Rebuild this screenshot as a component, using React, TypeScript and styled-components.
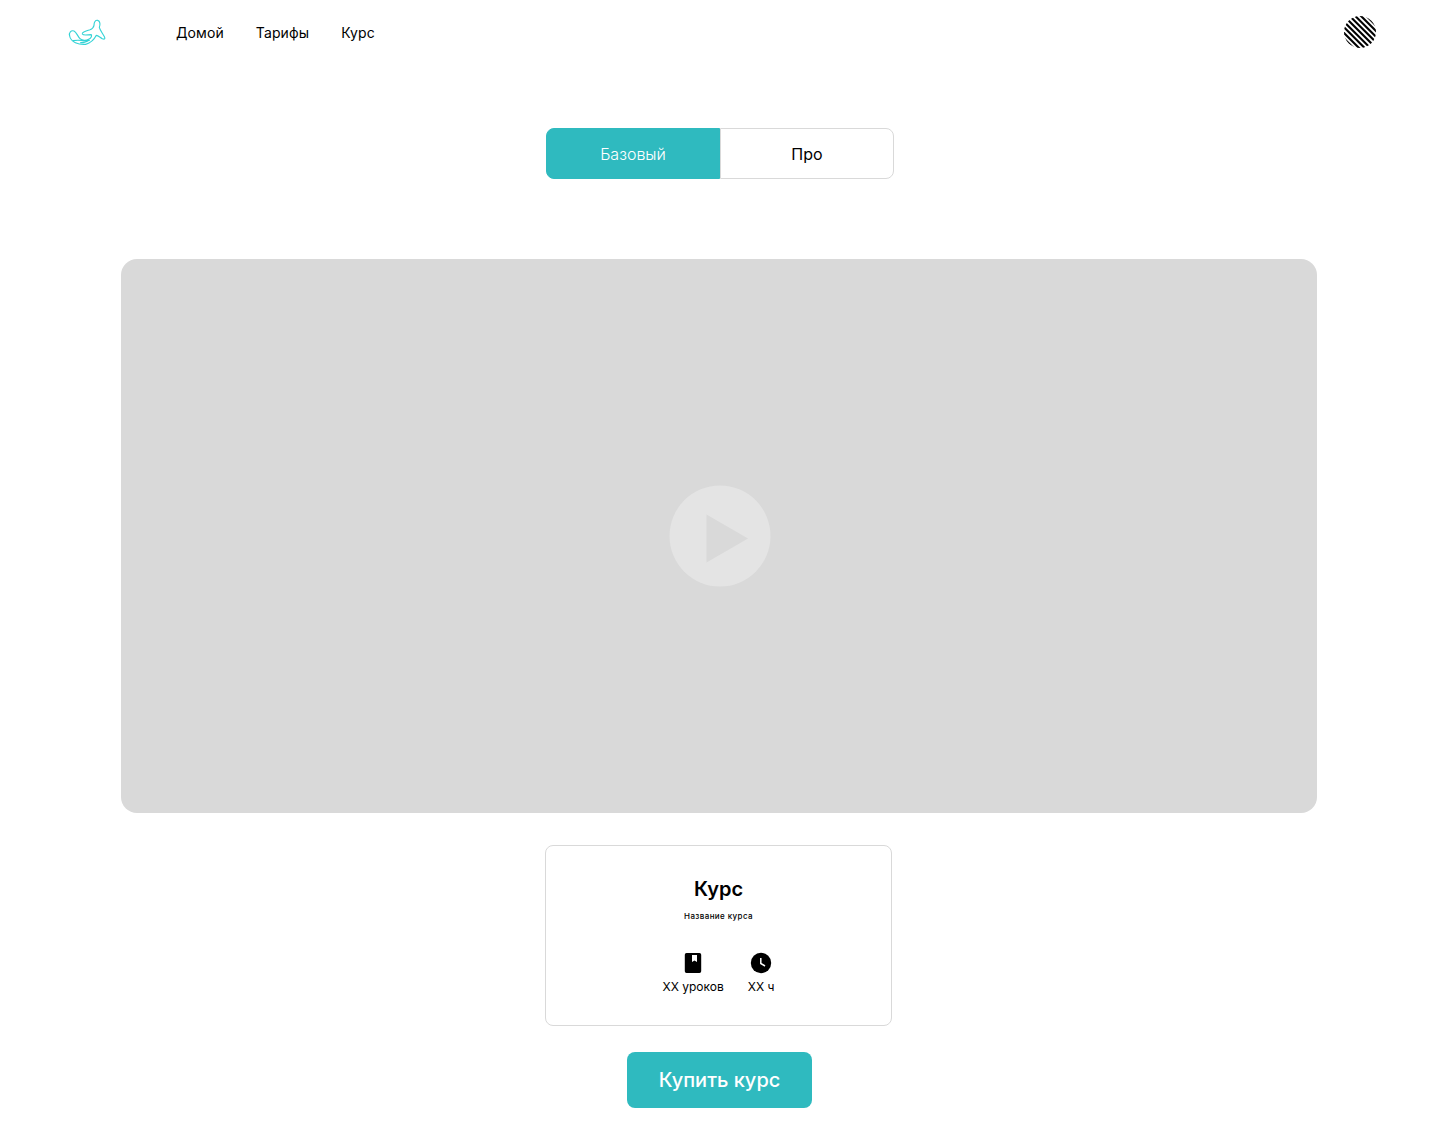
import React from "react";
import styled, { createGlobalStyle } from "styled-components";

const GlobalStyle = createGlobalStyle`
  *, *::before, *::after { box-sizing: border-box; }
  body { margin: 0; background: #fff; color: #000; font-family: Inter, "Liberation Sans", sans-serif; }
  button { font: inherit; margin: 0; cursor: pointer; }
`;

const Page = styled.div`
  display: flex;
  flex-direction: column;
  align-items: center;
  min-height: 1140px;
`;

const Header = styled.header`
  display: flex;
  align-items: center;
  width: 100%;
  height: 64px;
  padding: 0 64px 0 60px;
`;

const Nav = styled.nav`
  display: flex;
  gap: 32px;
  margin-left: 62px;
`;

const NavLink = styled.a`
  font-size: 14px;
  line-height: 20px;
  letter-spacing: 0.1px;
  padding-top: 1px;
  color: #000;
  text-decoration: none;
`;

const Avatar = styled.svg`
  display: block;
  width: 32px;
  height: 32px;
  margin-left: auto;
`;

const Tabs = styled.div`
  display: flex;
  width: 348px;
  height: 51px;
  margin-top: 64px;
`;

const Tab = styled.button<{ $active?: boolean }>`
  flex: 1;
  padding: 0;
  font-size: 16px;
  line-height: 24px;
  color: ${(p) => (p.$active ? "#fff" : "#000")};
  background: ${(p) => (p.$active ? "#2fbabf" : "#fff")};
  border: 1px solid ${(p) => (p.$active ? "#2fbabf" : "#d9d9d9")};
  font-weight: ${(p) => (p.$active ? 300 : 400)};
  &:first-child { border-radius: 8px 0 0 8px; }
  &:last-child { border-radius: 0 8px 8px 0; }
`;

const Video = styled.section`
  display: flex;
  align-items: center;
  justify-content: center;
  width: 1196px;
  height: 554px;
  margin: 80px 2px 0 0;
  border-radius: 16px;
  background: #d9d9d9;
`;

const PlayIcon = styled.svg`
  display: block;
  width: 102px;
  height: 102px;
  margin-left: 1px;
`;

const Card = styled.article`
  display: flex;
  flex-direction: column;
  align-items: center;
  width: 347px;
  height: 181px;
  margin: 32px 3px 0 0;
  padding-top: 28px;
  border: 1px solid #d9d9d9;
  border-radius: 8px;
`;

const Title = styled.h2`
  margin: 0;
  font-size: 20px;
  line-height: 30px;
  font-weight: 600;
`;

const Subtitle = styled.p`
  margin: 5px 0 0;
  font-size: 8px;
  line-height: 14px;
  font-weight: 500;
  letter-spacing: 0.4px;
`;

const Stats = styled.div`
  display: flex;
  gap: 24px;
  margin-top: 28px;
`;

const Stat = styled.div`
  display: flex;
  flex-direction: column;
  align-items: center;
  font-size: 12px;
  line-height: 20px;
  gap: 2px;
  svg { display: block; }
`;

const BuyButton = styled.button`
  width: 185px;
  height: 56px;
  margin: 26px 1px 0 0;
  padding: 0;
  border: 0;
  border-radius: 8px;
  background: #2fbabf;
  color: #fff;
  font-size: 20px;
  font-weight: 500;
`;

const Logo = () => (
  <svg width="54" height="40" viewBox="0 0 162 120" fill="none" stroke="#35d3d6" strokeWidth="3.4" strokeLinejoin="round" strokeLinecap="round">
    <path d="M29 72C26 62 33 54 42 57C50 61 52 72 60 80C66 86 78 87 86 82C93 78 96 73 94 68C84 68 70 72 67 66C65 60 78 57 90 53C98 50 101 46 102 40C102 30 106 24 113 25C121 27 121 38 118 46C120 55 128 64 134 76C136 82 132 82 127 80C120 76 114 70 109 70C104 80 92 93 77 97C56 99 32 90 29 72Z" />
    <path d="M40 86C56 82 72 88 88 85M62 92C70 92 80 90 87 84" />
  </svg>
);

const STRIPES = [-22.6, -17, -11.3, -5.7, 0, 5.7, 11.3, 17, 22.6];

const StripedAvatar = () => (
  <Avatar viewBox="0 0 32 32">
    <defs>
      <clipPath id="avatar"><circle cx="16" cy="16" r="16" /></clipPath>
    </defs>
    <g clipPath="url(#avatar)" stroke="#000" strokeWidth="2.1">
      {STRIPES.map((o) => (
        <line key={o} x1={-4 + o} y1={-4} x2={36 + o} y2={36} />
      ))}
    </g>
  </Avatar>
);

export default function App() {
  return (
    <Page>
      <GlobalStyle />
      <Header>
        <Logo />
        <Nav>
          <NavLink>Домой</NavLink>
          <NavLink>Тарифы</NavLink>
          <NavLink>Курс</NavLink>
        </Nav>
        <StripedAvatar />
      </Header>
      <Tabs>
        <Tab $active>Базовый</Tab>
        <Tab>Про</Tab>
      </Tabs>
      <Video>
        <PlayIcon viewBox="0 0 102 102">
          <path fill="#e4e4e4" fillRule="evenodd" d="M51 .5a50.5 50.5 0 1 1 0 101a50.5 50.5 0 1 1 0-101ZM37.5 29.5v48L79 53.500Z" />
        </PlayIcon>
      </Video>
      <Card>
        <Title>Курс</Title>
        <Subtitle>Название курса</Subtitle>
        <Stats>
          <Stat>
            <svg width="24" height="24" viewBox="0 0 24 24">
              <path fillRule="evenodd" d="M5.500 2h13a1.700 1.700 0 0 1 1.700 1.700v16.600a1.700 1.700 0 0 1-1.700 1.700h-13a1.700 1.700 0 0 1-1.700-1.700V3.700A1.700 1.700 0 0 1 5.500 2ZM11 4v7l2.500-1.500L16 11V4Z" />
            </svg>
            XX уроков
          </Stat>
          <Stat>
            <svg width="24" height="24" viewBox="0 0 24 24">
              <circle cx="12" cy="12" r="10.200" />
              <path d="M11.800 7v5.500l4.200 2.500" fill="none" stroke="#fff" strokeWidth="1.500" />
            </svg>
            XX ч
          </Stat>
        </Stats>
      </Card>
      <BuyButton>Купить курс</BuyButton>
    </Page>
  );
}
